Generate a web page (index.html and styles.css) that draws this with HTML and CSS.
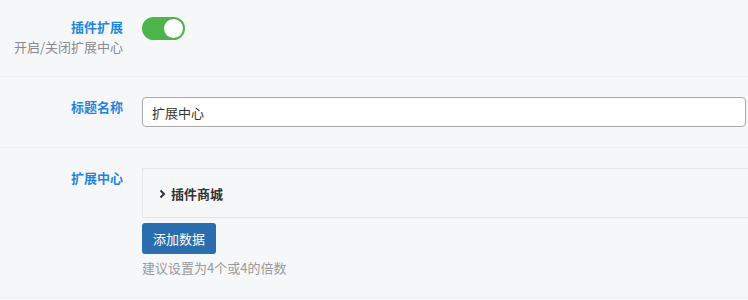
FILE: index.html
```html
<!DOCTYPE html>
<html lang="zh">
<head>
<meta charset="utf-8">
<title>扩展中心</title>
<link rel="stylesheet" href="styles.css">
</head>
<body>
<div class="form">
  <div class="row row-first">
    <div class="label">
      <div class="label-title">插件扩展</div>
      <div class="label-sub">开启/关闭扩展中心</div>
    </div>
    <div class="field">
      <span class="switch"><span class="knob"></span></span>
    </div>
  </div>
  <div class="row">
    <div class="label">
      <div class="label-title">标题名称</div>
    </div>
    <div class="field">
      <input class="input" type="text" value="扩展中心">
    </div>
  </div>
  <div class="row">
    <div class="label">
      <div class="label-title">扩展中心</div>
    </div>
    <div class="field">
      <div class="panel">
        <svg class="chev" width="7" height="10" viewBox="0 0 7 10"><path d="M1.5 1.5 L5 5 L1.5 8.5" fill="none" stroke="#333" stroke-width="2"/></svg>
        <span class="panel-title">插件商城</span>
      </div>
      <button class="btn">添加数据</button>
      <div class="hint">建议设置为4个或4的倍数</div>
    </div>
  </div>
</div>
</body>
</html>
```
FILE: styles.css
```css
html, body {
  margin: 0;
  padding: 0;
  background: #f6f7f9;
  overflow: hidden;
}
body {
  font-family: "Noto Sans CJK SC", "Liberation Sans", sans-serif;
  font-size: 13px;
  color: #333;
}
.form {
  width: 748px;
}
.row {
  display: flex;
  gap: 19px;
  padding: 20px 0;
  border-bottom: 1px solid #eceef1;
}
.row-first {
  padding-top: 17px;
  padding-bottom: 19px;
}
.label {
  width: 123px;
  flex: none;
  text-align: right;
}
.label-title {
  color: #1f86e0;
  font-weight: bold;
  line-height: 20px;
}
.label-sub {
  color: #8a8a8a;
  line-height: 20px;
}
.field {
  flex: 1;
  min-width: 0;
  display: flex;
  flex-direction: column;
  align-items: flex-start;
}
.switch {
  display: flex;
  align-items: center;
  justify-content: flex-end;
  width: 43px;
  height: 23px;
  box-sizing: border-box;
  padding: 2px;
  border-radius: 12px;
  background: #4cb44a;
}
.knob {
  width: 19px;
  height: 19px;
  border-radius: 50%;
  background: #fff;
}
.input {
  width: 604px;
  height: 30px;
  box-sizing: border-box;
  border: 1px solid #a9a9a9;
  border-radius: 4px;
  background: #fff;
  padding: 0 9px;
  font-family: inherit;
  font-size: 13px;
  color: #333;
  outline: none;
}
.panel {
  align-self: stretch;
  margin-right: -6px;
  height: 50px;
  box-sizing: border-box;
  border: 1px solid #e3e5e8;
  display: flex;
  align-items: center;
  gap: 5px;
  padding: 1px 0 0 16px;
}
.chev {
  display: block;
  margin-top: 1px;
}
.panel-title {
  font-weight: bold;
  color: #333;
  line-height: 20px;
}
.btn {
  margin-top: 5px;
  height: 31px;
  padding: 0 11px;
  border: none;
  border-radius: 3px;
  background: #2b6eb0;
  color: #fff;
  font-family: inherit;
  font-size: 13px;
}
.hint {
  margin-top: 5px;
  line-height: 18px;
  color: #999;
}
```
